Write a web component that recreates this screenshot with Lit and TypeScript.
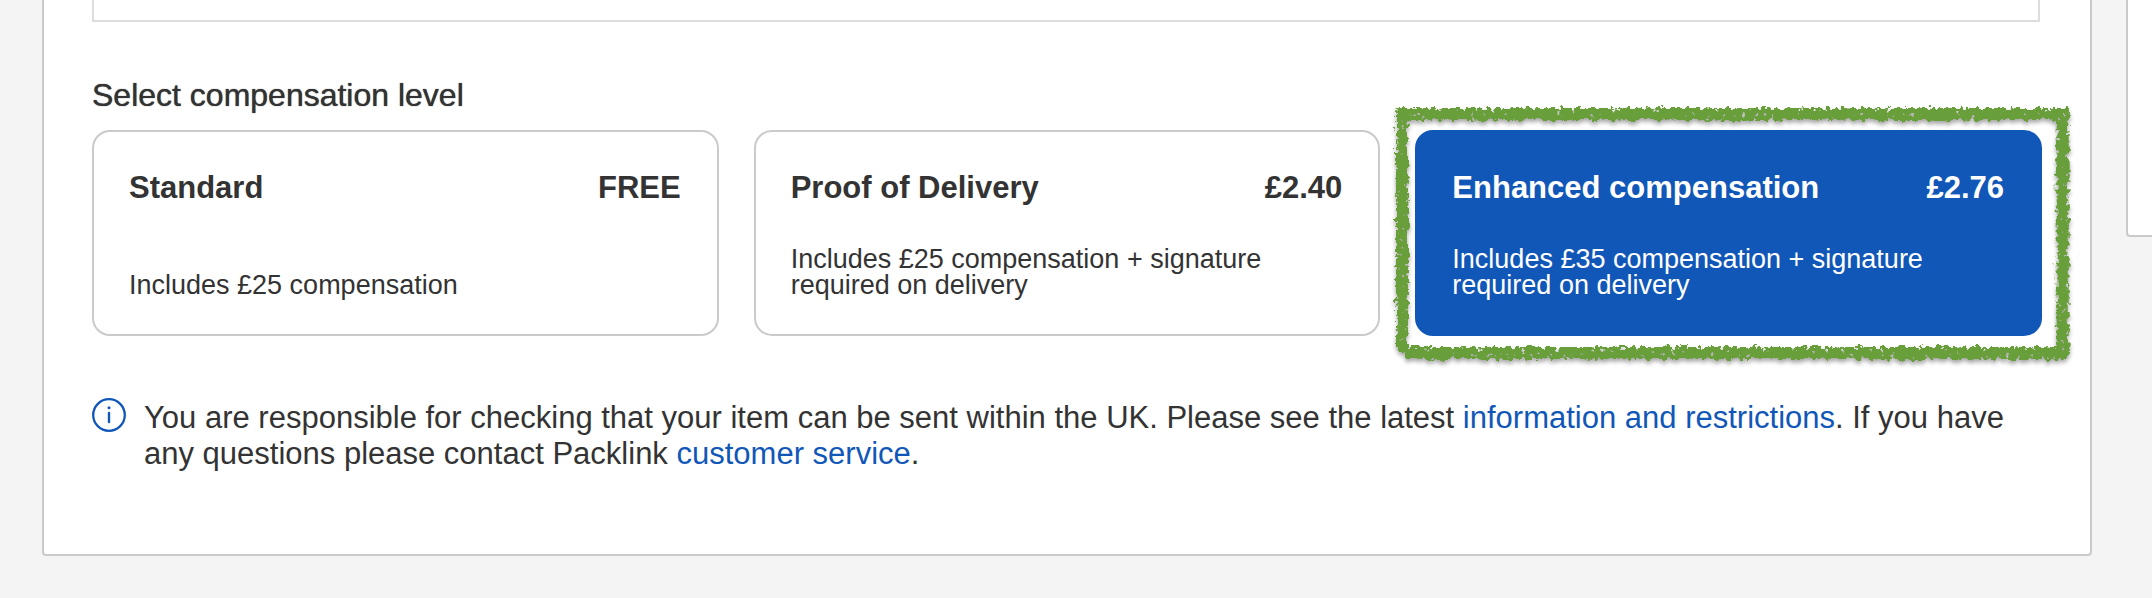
import { LitElement, html, css, nothing } from "lit";
import { customElement, property, state } from "lit/decorators.js";

interface Level {
  id: string;
  name: string;
  price: string;
  details: string;
}

const LEVELS: Level[] = [
  { id: "standard", name: "Standard", price: "FREE", details: "Includes £25 compensation" },
  {
    id: "proof",
    name: "Proof of Delivery",
    price: "£2.40",
    details: "Includes £25 compensation + signature required on delivery",
  },
  {
    id: "enhanced",
    name: "Enhanced compensation",
    price: "£2.76",
    details: "Includes £35 compensation + signature required on delivery",
  },
];

/* Hand-drawn chalk outline that surrounds its positioned parent. */
@customElement("brush-frame")
export class BrushFrame extends LitElement {
  static styles = css`
    :host {
      position: absolute;
      inset: -22px -27px -23px -19px;
      pointer-events: none;
    }
    .canvas {
      display: block;
      width: 100%;
      height: 100%;
      overflow: visible;
    }
    .stroke {
      fill: #699f3b;
    }
    .top {
      width: 100%;
      height: 12px;
    }
    .left {
      width: 12px;
      height: calc(100% - 8px);
    }
    .right {
      x: calc(100% - 12px);
      width: 12px;
      height: 100%;
    }
    .bottom {
      x: 9px;
      y: calc(100% - 12px);
      width: calc(100% - 9px);
      height: 12px;
    }
  `;

  render() {
    return html`
      <svg class="canvas" aria-hidden="true">
        <filter id="chalk" x="-5%" y="-10%" width="110%" height="120%" color-interpolation-filters="sRGB">
          <feTurbulence type="fractalNoise" baseFrequency="0.2" numOctaves="2" seed="4" result="noise" />
          <feDisplacementMap
            in="SourceGraphic"
            in2="noise"
            scale="10"
            xChannelSelector="R"
            yChannelSelector="G"
            result="rough"
          />
          <feColorMatrix
            in="noise"
            type="matrix"
            values="0 0 0 0 0  0 0 0 0 0  0 0 0 0 0  0 0 14 0 -9.6"
            result="flecks"
          />
          <feComposite in="rough" in2="flecks" operator="out" result="grainy" />
          <feDropShadow in="grainy" dx="0" dy="3" stdDeviation="2" flood-color="#000" flood-opacity="0.35" />
        </filter>
        <g filter="url(#chalk)">
          <rect class="stroke top" />
          <rect class="stroke left" />
          <rect class="stroke right" />
          <rect class="stroke bottom" />
        </g>
      </svg>
    `;
  }
}

@customElement("level-card")
export class LevelCard extends LitElement {
  @property({ attribute: false }) level!: Level;
  @property({ type: Boolean, reflect: true }) selected = false;

  static styles = css`
    :host {
      display: flex;
      position: relative;
    }
    .card {
      box-sizing: border-box;
      flex: 1;
      display: flex;
      flex-direction: column;
      justify-content: space-between;
      gap: 40px;
      padding: 38px 36px 36px 35px;
      border: 2px solid #cacaca;
      border-radius: 18px;
      background: #fff;
      cursor: pointer;
    }
    .card.selected {
      border-color: #1157b8;
      background: #1157b8;
      color: #fff;
    }
    .radio {
      position: absolute;
      opacity: 0;
      margin: 0;
    }
    .heading {
      display: flex;
      justify-content: space-between;
      gap: 24px;
      font-size: 31px;
      line-height: 36px;
      font-weight: 700;
    }
    .details {
      max-width: 500px;
      font-size: 27px;
      line-height: 26px;
    }
  `;

  private choose() {
    this.dispatchEvent(new CustomEvent("choose", { detail: this.level.id }));
  }

  render() {
    const { id, name, price, details } = this.level;
    return html`
      <label class="card ${this.selected ? "selected" : ""}" for=${id}>
        <input
          class="radio"
          type="radio"
          name="level"
          id=${id}
          .checked=${this.selected}
          @change=${this.choose}
        />
        <span class="heading"><span>${name}</span><span>${price}</span></span>
        <span class="details">${details}</span>
      </label>
      ${this.selected ? html`<brush-frame></brush-frame>` : nothing}
    `;
  }
}

@customElement("app-root")
export class AppRoot extends LitElement {
  @state() private chosen = "enhanced";

  static styles = css`
    :host {
      box-sizing: border-box;
      display: grid;
      grid-template-columns: 1fr 26px;
      column-gap: 34px;
      align-items: start;
      min-height: 100vh;
      padding: 0 0 42px 42px;
      overflow: hidden;
      background: #f4f4f4;
      color: #333;
      font-family: "Liberation Sans", Arial, sans-serif;
      font-size: 31px;
      line-height: 36px;
    }
    .panel {
      border: 2px solid #cacaca;
      border-top: 0;
      border-radius: 0 0 4px 4px;
      background: #fff;
      padding: 0 48px 82px;
    }
    .previous {
      height: 20px;
      margin-right: 2px;
      border: 2px solid #ddd;
      border-top: 0;
    }
    .levels {
      margin: 55px 0 0;
      padding: 0;
      border: 0;
      min-width: 0;
    }
    .title {
      padding: 0;
      margin-bottom: 17px;
      font-size: 32px;
      text-shadow: 0 0 1px #333;
    }
    .cards {
      display: grid;
      grid-template-columns: repeat(3, 1fr);
      gap: 35px;
    }
    .notice {
      display: flex;
      align-items: flex-start;
      gap: 18px;
      margin-top: 62px;
    }
    .info {
      flex: none;
      width: 34px;
      height: 34px;
    }
    .message {
      margin: 0;
      padding-top: 2px;
    }
    .link {
      color: #1157b8;
      text-decoration: none;
    }
    .aside {
      height: 235px;
      border: 2px solid #cacaca;
      border-width: 0 0 2px 2px;
      border-radius: 0 0 0 4px;
      background: #fff;
    }
  `;

  render() {
    return html`
      <main class="panel">
        <div class="previous"></div>
        <fieldset class="levels">
          <legend class="title">Select compensation level</legend>
          <div class="cards">
            ${LEVELS.map(
              (level) => html`
                <level-card
                  .level=${level}
                  ?selected=${level.id === this.chosen}
                  @choose=${(e: CustomEvent<string>) => (this.chosen = e.detail)}
                ></level-card>
              `
            )}
          </div>
        </fieldset>
        <div class="notice">
          <svg class="info" viewBox="0 0 34 34" fill="none" stroke="#1157b8" aria-hidden="true">
            <circle cx="17" cy="17" r="15.8" stroke-width="2.3" />
            <path d="M17 15V24" stroke-width="2.4" stroke-linecap="round" />
            <circle cx="17" cy="9.8" r="1.5" fill="#1157b8" stroke="none" />
          </svg>
          <p class="message">
            You are responsible for checking that your item can be sent within the UK. Please see the latest
            <a class="link" href="#restrictions">information and restrictions</a>. If you have any questions please
            contact Packlink <a class="link" href="#service">customer service</a>.
          </p>
        </div>
      </main>
      <aside class="aside"></aside>
    `;
  }
}
